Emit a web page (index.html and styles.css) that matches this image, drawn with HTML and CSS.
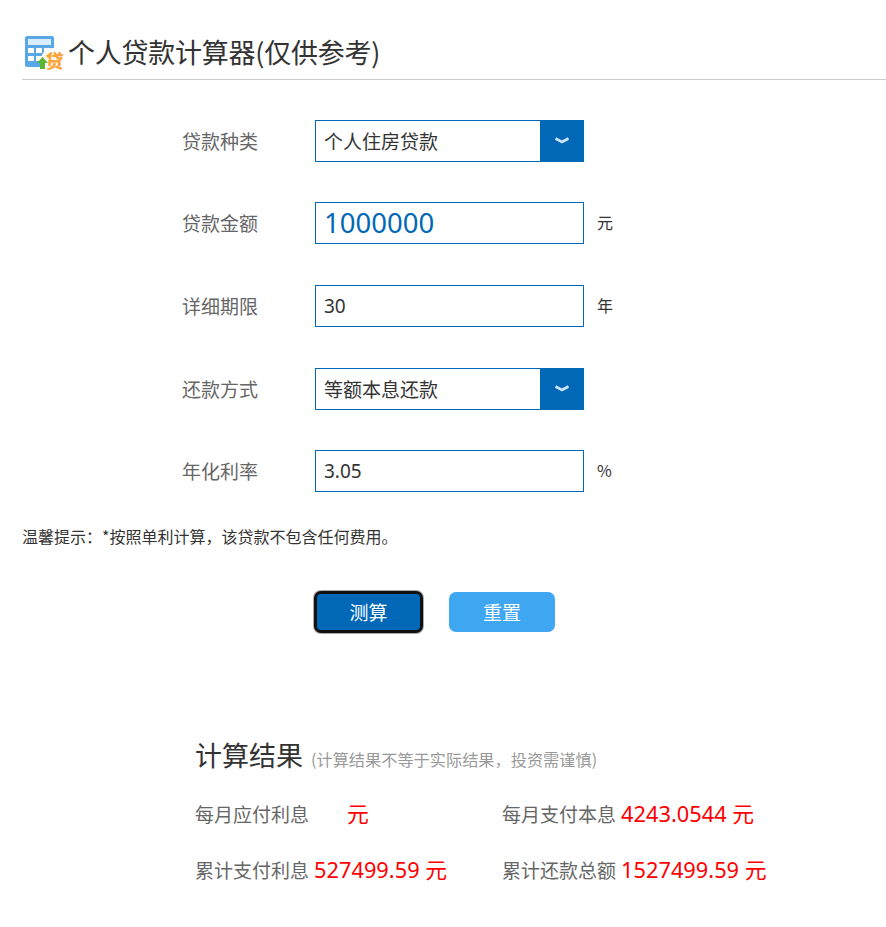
FILE: index.html
```html
<!DOCTYPE html>
<html lang="zh">
<head>
<meta charset="utf-8">
<title>个人贷款计算器</title>
<link rel="stylesheet" href="styles.css">
</head>
<body>
<header class="head">
  <svg class="logo" width="42" height="40" viewBox="0 0 42 40">
    <rect x="3" y="3" width="29" height="31" rx="2" fill="#5aa7e8"/>
    <rect x="6" y="6" width="23" height="6" fill="#d9ecfb"/>
    <rect x="6" y="15" width="6" height="5" fill="#fff"/><rect x="14" y="15" width="6" height="5" fill="#fff"/><rect x="22" y="15" width="6" height="5" fill="#fff"/>
    <rect x="6" y="23" width="6" height="5" fill="#fff"/><rect x="14" y="23" width="6" height="5" fill="#fff"/>
    <circle cx="31" cy="27" r="12" fill="#fff"/>
    <text class="logo-glyph" x="23.500" y="35">贷</text>
    <path d="M15 30l5.500-6 5.500 6h-3v6h-5v-6z" fill="#5cb531"/>
  </svg>
  <h1 class="title">个人贷款计算器(仅供参考)</h1>
</header>
<form class="form">
  <div class="row row-first">
    <label class="label">贷款种类</label>
    <div class="field select"><span class="value">个人住房贷款</span>
      <span class="arrow"><svg width="16" height="8" viewBox="0 0 16 8"><path d="M1.500 1.500l6.500 3.500 6.500-3.500" fill="none" stroke="#cfe4f6" stroke-width="2.600"/></svg></span>
    </div>
  </div>
  <div class="row">
    <label class="label">贷款金额</label>
    <div class="field"><span class="value big">1000000</span></div>
    <span class="unit">元</span>
  </div>
  <div class="row">
    <label class="label">详细期限</label>
    <div class="field"><span class="value">30</span></div>
    <span class="unit">年</span>
  </div>
  <div class="row">
    <label class="label">还款方式</label>
    <div class="field select"><span class="value">等额本息还款</span>
      <span class="arrow"><svg width="16" height="8" viewBox="0 0 16 8"><path d="M1.500 1.500l6.500 3.500 6.500-3.500" fill="none" stroke="#cfe4f6" stroke-width="2.600"/></svg></span>
    </div>
  </div>
  <div class="row">
    <label class="label">年化利率</label>
    <div class="field"><span class="value">3.05</span></div>
    <span class="unit">%</span>
  </div>
</form>
<p class="tip">温馨提示：*按照单利计算，该贷款不包含任何费用。</p>
<div class="actions">
  <button type="button" class="btn primary">测算</button>
  <button type="button" class="btn light">重置</button>
</div>
<section class="result">
  <div class="result-head"><h2 class="result-title">计算结果</h2><span class="note">(计算结果不等于实际结果，投资需谨慎)</span></div>
  <div class="grid">
    <div class="item"><span class="k">每月应付利息</span><span class="v v-empty">元</span></div>
    <div class="item"><span class="k">每月支付本息</span><span class="v">4243.0544 元</span></div>
    <div class="item"><span class="k">累计支付利息</span><span class="v">527499.59 元</span></div>
    <div class="item"><span class="k">累计还款总额</span><span class="v">1527499.59 元</span></div>
  </div>
</section>
</body>
</html>
```
FILE: styles.css
```css
* { box-sizing: border-box; }
html, body { margin: 0; padding: 0; }
body { width: 886px; height: 927px; overflow: hidden; background: #fff; color: #333; font-family: "Noto Sans", "Noto Sans CJK SC", sans-serif; }
.head { margin: 27px 0 0 22px; height: 53px; border-bottom: 1px solid #ccc; display: flex; align-items: center; }
.logo { display: block; margin-right: 4px; flex: none; }
.logo-glyph { font-family: "Noto Sans CJK SC", sans-serif; font-size: 18px; font-weight: 900; fill: #fba53a; }
.title { margin: 0; padding-bottom: 3px; font-size: 27px; font-weight: 400; color: #333; line-height: 48px; letter-spacing: -0.25px; font-family: "Noto Sans CJK SC", sans-serif; }
.form { margin-left: 182px; padding-top: 39.85px; }
.row { display: flex; align-items: center; height: 42px; margin-bottom: 40.6px; }
.label { width: 133px; padding-bottom: 1px; font-size: 19px; color: #666; font-family: "Noto Sans CJK SC", sans-serif; }
.field { width: 269px; height: 42px; border: 1px solid #0068b7; display: flex; align-items: center; padding-left: 8px; background: #fff; position: relative; }
.value { font-size: 19px; color: #333; font-family: "Noto Sans", "Noto Sans CJK SC", sans-serif; }
.big { font-size: 27.5px; padding-bottom: 2px; color: #0068b7; }
.select { padding-right: 0; justify-content: space-between; }
.arrow { width: 44px; height: 42px; margin: -1px -1px -1px 0; background: #0068b7; display: flex; align-items: center; justify-content: center; }
.unit { margin-left: 13px; padding-bottom: 2px; font-size: 16px; color: #333; font-family: "Noto Sans CJK SC", sans-serif; }
.tip { margin: -8px 0 0 22px; font-size: 16px; line-height: 22px; color: #333; font-family: "Noto Sans CJK SC", sans-serif; }
.actions { display: flex; margin: 45px 0 0 314px; gap: 26px; }
.btn { height: 40px; border-radius: 7px; border: 0; color: #fff; font-size: 19px; font-family: "Noto Sans CJK SC", sans-serif; padding: 0; }
.primary { width: 109px; height: 42px; margin-top: -1px; background: #0068b7; border: 3px solid #111; box-shadow: 0 0 0 1px #aaa; }
.light { width: 106px; background: #3fa6f2; }
.result { margin: 102px 0 0 195px; }
.result-head { display: flex; align-items: baseline; }
.result-title { margin: 0; font-size: 27px; font-weight: 400; color: #333; font-family: "Noto Sans CJK SC", sans-serif; }
.note { margin-left: 8px; font-size: 16.2px; color: #999; font-family: "Noto Sans CJK SC", sans-serif; }
.grid { display: grid; grid-template-columns: 307px 1fr; row-gap: 25px; margin-top: 23px; }
.item { display: flex; align-items: baseline; height: 31px; }
.k { font-size: 19px; color: #666; font-family: "Noto Sans CJK SC", sans-serif; }
.v { margin-left: 5px; font-size: 21.8px; color: #f00; font-family: "Noto Sans", "Noto Sans CJK SC", sans-serif; }
.v-empty { margin-left: 38px; }
```
